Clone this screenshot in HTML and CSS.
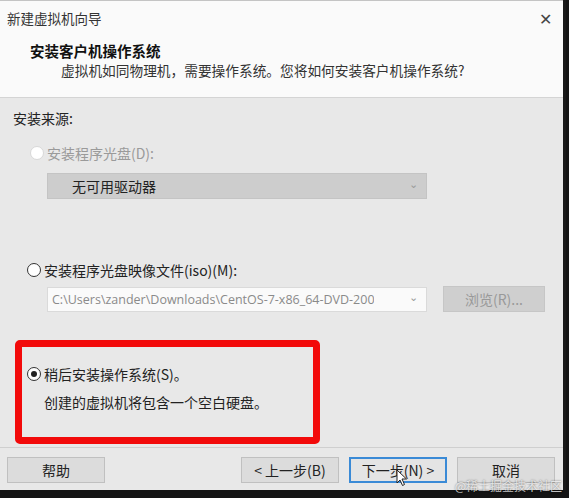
FILE: index.html
```html
<!DOCTYPE html>
<html lang="zh-CN">
<head>
    <meta charset="UTF-8">
    <title>新建虚拟机向导</title>
    <link rel="stylesheet" href="styles.css">
</head>
<body>
<div class="window">
    <div class="top">
        <div class="titlebar">
            <span class="title">新建虚拟机向导</span>
            <span class="close">✕</span>
        </div>
        <div class="heading">安装客户机操作系统</div>
        <div class="subheading">虚拟机如同物理机，需要操作系统。您将如何安装客户机操作系统?</div>
    </div>

    <div class="body">
        <div class="section-label">安装来源:</div>

        <div class="option disabled">
            <span class="radio"></span>
            <span>安装程序光盘(D):</span>
        </div>
        <div class="select disabled-select">
            <span>无可用驱动器</span>
            <span class="caret">⌄</span>
        </div>

        <div class="option iso">
            <span class="radio"></span>
            <span>安装程序光盘映像文件(iso)(M):</span>
        </div>
        <div class="iso-row">
            <div class="select path-select">
                <span class="path">C:\Users\zander\Downloads\CentOS-7-x86_64-DVD-2009.iso</span>
                <span class="caret">⌄</span>
            </div>
            <div class="btn browse">浏览(R)...</div>
        </div>

        <div class="later-box">
            <div class="option">
                <span class="radio checked"></span>
                <span>稍后安装操作系统(S)。</span>
            </div>
            <div class="later-note">创建的虚拟机将包含一个空白硬盘。</div>
        </div>
    </div>

    <div class="footer">
        <div class="btn">帮助</div>
        <div class="spacer"></div>
        <div class="btn">&lt; 上一步(B)</div>
        <div class="btn primary">下一步(N) &gt;
            <svg class="cursor" width="12" height="18" viewBox="0 0 12 18">
                <path d="M1 1 L1 14 L4 11 L6.5 16.5 L8.5 15.5 L6 10 L10.5 10 Z" fill="#fff" stroke="#222" stroke-width="1"/>
            </svg>
        </div>
        <div class="btn">取消</div>
    </div>
    <div class="watermark">@稀土掘金技术社区</div>
</div>
</body>
</html>
```

FILE: styles.css
```css
body {
    margin: 0;
    width: 569px;
    height: 498px;
    background-color: #141414;
    font-family: "Noto Sans CJK SC", "Liberation Sans", sans-serif;
    font-size: 14px;
    color: #222;
    overflow: hidden;
}
.window {
    position: relative;
    width: 563px;
    height: 490px;
    background-color: #e8e8e8;
    border-right: 3px solid #1a1a1a;
    display: flex;
    flex-direction: column;
}
.top {
    height: 98px;
    box-sizing: border-box;
    background-color: #fafafa;
    border-top: 1px solid #c4c4c4;
    border-bottom: 1px solid #d4d4d4;
}
.titlebar {
    height: 33px;
    display: flex;
    align-items: center;
    justify-content: space-between;
    padding: 0 11px 0 7px;
    font-size: 13.5px;
}
.title {
    color: #333;
}
.close {
    font-size: 16px;
    color: #444;
}
.heading {
    margin: 7px 0 0 30px;
    font-weight: bold;
    font-size: 14.5px;
    line-height: 20px;
    color: #111;
}
.subheading {
    margin: 0 0 0 61px;
    font-size: 13.7px;
    line-height: 18px;
    color: #333;
}
.body {
    flex: 1;
    padding: 10px 0 0 13px;
}
.section-label {
    line-height: 20px;
    color: #222;
}
.option {
    display: flex;
    align-items: center;
    gap: 3px;
    line-height: 20px;
    margin: 15px 0 0 14px;
}
.option.disabled {
    margin-left: 17px;
    color: #9a9a9a;
}
.radio {
    width: 12px;
    height: 12px;
    border: 1px solid #333;
    border-radius: 50%;
    background-color: #fff;
    position: relative;
}
.disabled .radio {
    border-color: #d8d8d8;
}
.radio.checked::after {
    content: '';
    position: absolute;
    left: 3px;
    top: 3px;
    width: 6px;
    height: 6px;
    border-radius: 50%;
    background-color: #222;
}
.select {
    height: 26px;
    display: flex;
    align-items: center;
    justify-content: space-between;
    box-sizing: border-box;
    border: 1px solid #d0d0d0;
    padding: 0 8px 0 4px;
}
.disabled-select {
    width: 380px;
    margin: 10px 0 0 34px;
    background-color: #cdcdcd;
    border-color: #c4c4c4;
    padding-left: 24px;
    color: #222;
}
.caret {
    color: #9a9a9a;
    font-size: 11px;
    line-height: 1;
    margin-top: -5px;
}
.option.iso {
    margin-top: 61px;
}
.iso-row {
    display: flex;
    align-items: center;
    gap: 16px;
    margin: 6px 0 0 34px;
}
.path-select {
    width: 380px;
    height: 25px;
    background-color: #fafafa;
    border-color: #dadada;
    color: #8a8a8a;
    font-family: "Open Sans", "Liberation Sans", sans-serif;
    font-size: 12.5px;
}
.path {
    overflow: hidden;
    white-space: nowrap;
    width: 322px;
}
.btn {
    width: 98px;
    height: 26px;
    box-sizing: border-box;
    border: 1px solid #c0c0c0;
    background-color: #dcdcdc;
    display: flex;
    align-items: center;
    justify-content: center;
    color: #222;
    position: relative;
}
.browse {
    width: 102px;
    background-color: #cfcfcf;
    border-color: #c6c6c6;
    color: #999;
}
.later-box {
    width: 305px;
    height: 104px;
    box-sizing: border-box;
    margin: 28px 0 0 2px;
    border: 7px solid #f20a0a;
    border-radius: 5px;
    padding-top: 17px;
}
.later-box .option {
    margin: 0 0 0 5px;
}
.later-note {
    margin: 8px 0 0 22px;
    line-height: 20px;
}
.footer {
    height: 43px;
    border-top: 1px solid #cfcfcf;
    display: flex;
    align-items: flex-start;
    gap: 10px;
    padding: 9px 0 0 7px;
    box-sizing: border-box;
}
.spacer {
    width: 116px;
}
.btn.primary {
    border: 2px solid #3a8ad6;
    background-color: #e4e4e4;
}
.cursor {
    position: absolute;
    left: 45px;
    top: 10px;
}
.watermark {
    position: absolute;
    right: 1px;
    bottom: -4px;
    font-size: 12px;
    line-height: 16px;
    color: rgba(255, 255, 255, 0.75);
    text-shadow: 0 0 2px rgba(0, 0, 0, 0.6);
}
```
